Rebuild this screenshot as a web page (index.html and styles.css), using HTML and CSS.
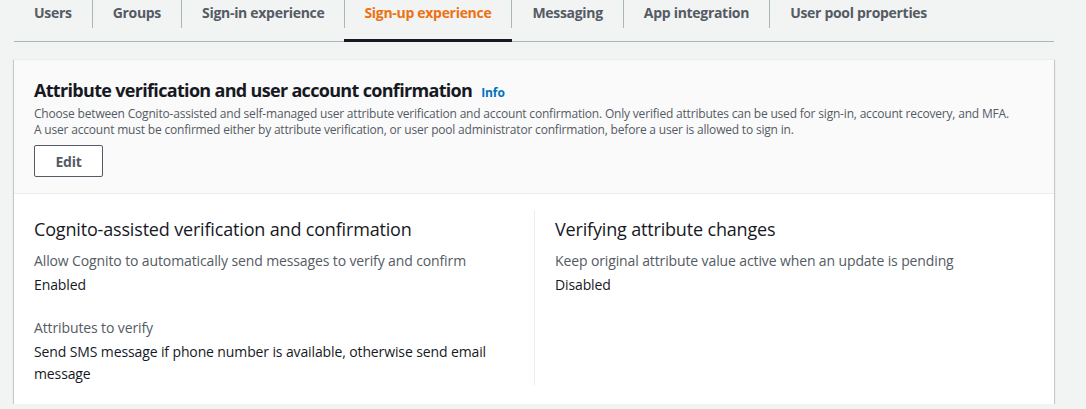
FILE: index.html
```html
<!DOCTYPE html>
<html lang="en">
<head>
<meta charset="utf-8">
<title>Sign-up experience</title>
<link rel="stylesheet" href="styles.css">
</head>
<body>
<nav class="tabs">
  <a class="tab"><span class="tab-label">Users</span></a>
  <a class="tab"><span class="tab-label">Groups</span></a>
  <a class="tab"><span class="tab-label">Sign-in experience</span></a>
  <a class="tab tab-active"><span class="tab-label">Sign-up experience</span></a>
  <a class="tab"><span class="tab-label">Messaging</span></a>
  <a class="tab"><span class="tab-label">App integration</span></a>
  <a class="tab"><span class="tab-label tab-last">User pool properties</span></a>
</nav>
<section class="card">
  <header class="card-header">
    <h2 class="card-title">Attribute verification and user account confirmation <a class="info">Info</a></h2>
    <p class="card-desc">Choose between Cognito-assisted and self-managed user attribute verification and account confirmation. Only verified attributes can be used for sign-in, account recovery, and MFA.<br>A user account must be confirmed either by attribute verification, or user pool administrator confirmation, before a user is allowed to sign in.</p>
    <button class="btn">Edit</button>
  </header>
  <div class="card-body">
    <div class="col">
      <h3 class="col-title">Cognito-assisted verification and confirmation</h3>
      <div class="field">
        <div class="label">Allow Cognito to automatically send messages to verify and confirm</div>
        <div class="value">Enabled</div>
      </div>
      <div class="field">
        <div class="label">Attributes to verify</div>
        <div class="value">Send SMS message if phone number is available, otherwise send email message</div>
      </div>
    </div>
    <div class="col col-right">
      <h3 class="col-title">Verifying attribute changes</h3>
      <div class="field">
        <div class="label">Keep original attribute value active when an update is pending</div>
        <div class="value">Disabled</div>
      </div>
    </div>
  </div>
</section>
</body>
</html>
```
FILE: styles.css
```css
* { box-sizing: border-box; }
body {
  margin: 0;
  background: #f2f3f3;
  font-family: "Open Sans", "Noto Sans", sans-serif;
  color: #16191f;
}
.tabs {
  display: flex;
  margin: 0 32px 0 14px;
  border-bottom: 1px solid #aab7b8;
  height: 42px;
}
.tab {
  display: block;
  height: 41px;
  padding-bottom: 13px;
  font-size: 14px;
  font-weight: 700;
  letter-spacing: -0.3px;
  color: #545b64;
}
.tab-label {
  display: block;
  height: 28px;
  line-height: 26px;
  padding: 0 20px;
  border-right: 1px solid #aab7b8;
}
.tab-label.tab-last { border-right: none; }
.tab-active {
  color: #ec7211;
  padding-bottom: 10px;
  height: 42px;
  border-bottom: 3px solid #16191f;
  margin-left: -1px;
}
.card {
  margin: 17px 32px 0 14px;
  background: #fff;
  border-top: 1px solid #eaeded;
  box-shadow: 0 1px 1px 0 rgba(0, 28, 36, 0.3), 1px 1px 1px 0 rgba(0, 28, 36, 0.15), -1px 1px 1px 0 rgba(0, 28, 36, 0.15);
}
.card-header {
  background: #fafafa;
  border-bottom: 1px solid #eaeded;
  padding: 19px 20px 16px;
}
.card-title {
  margin: 0;
  font-size: 18px;
  line-height: 22px;
  font-weight: 700;
  letter-spacing: -0.68px;
  color: #16191f;
}
.info {
  margin-left: 5px;
  font-size: 12px;
  font-weight: 700;
  letter-spacing: -0.1px;
  color: #0073bb;
}
.card-desc {
  margin: 2px 0 0;
  font-size: 12px;
  line-height: 16px;
  letter-spacing: -0.19px;
  color: #545b64;
}
.btn {
  margin-top: 7px;
  display: block;
  width: 69px;
  height: 32px;
  background: #fff;
  border: 1px solid #545b64;
  border-radius: 2px;
  font-family: inherit;
  font-size: 14px;
  font-weight: 700;
  letter-spacing: -0.3px;
  color: #545b64;
  padding: 0;
}
.card-body {
  display: grid;
  grid-template-columns: 1fr 1fr;
  padding: 16px 20px 19px;
}
.col {
  padding: 8px 20px 0 0;
}
.col-right {
  border-left: 1px solid #eaeded;
  padding-left: 20px;
}
.col-title {
  margin: 0 0 10px;
  font-size: 18px;
  line-height: 22px;
  font-weight: 400;
  letter-spacing: -0.17px;
  color: #16191f;
}
.field + .field { margin-top: 21px; }
.label {
  font-size: 14px;
  line-height: 22px;
  letter-spacing: -0.12px;
  color: #545b64;
}
.value {
  font-size: 14px;
  line-height: 22px;
  letter-spacing: -0.12px;
  color: #16191f;
  margin-top: 2px;
}
```
